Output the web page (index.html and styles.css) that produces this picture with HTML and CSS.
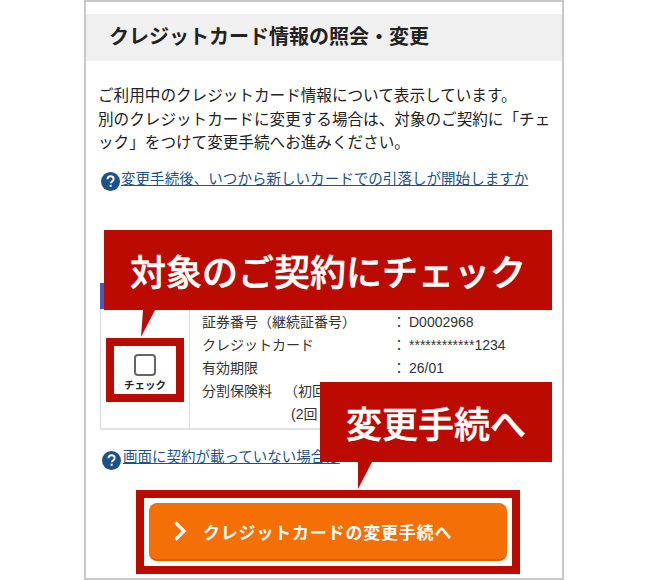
FILE: index.html
```html
<!DOCTYPE html>
<html lang="ja">
<head>
<meta charset="utf-8">
<title>クレジットカード情報の照会・変更</title>
<link rel="stylesheet" href="styles.css">
</head>
<body>
<main class="phone">
  <h1 class="title">クレジットカード情報の照会・変更</h1>
  <div class="content">
    <p class="intro">ご利用中のクレジットカード情報について表示しています。<br>別のクレジットカードに変更する場合は、対象のご契約に「チェック」をつけて変更手続へお進みください。</p>
    <a class="help help-first" href="#">
      <svg class="help-icon" viewBox="0 0 20 20"><circle cx="10" cy="10" r="10" fill="#1d5288"/><path d="M6.8 7.6C6.900 5.600 8.200 4.500 10.100 4.500c1.900 0 3.200 1.100 3.200 2.800 0 1.200-.6 1.900-1.600 2.600-.9.6-1.200 1-1.200 2" fill="none" stroke="#fff" stroke-width="2"/><rect x="9.100" y="13.400" width="2.100" height="2.200" fill="#fff"/></svg>
      <span class="help-text">変更手続後、いつから新しいカードでの引落しが開始しますか</span>
    </a>
    <section class="contract">
      <div class="contract-head"></div>
      <div class="contract-body">
        <div class="check-cell">
          <div class="check-mark">
            <span class="check-box"></span>
            <span class="check-label">チェック</span>
          </div>
        </div>
        <div class="details">
          <div class="row"><span class="key">証券番号（継続証番号）</span><span class="val"><i class="colon">：</i>D0002968</span></div>
          <div class="row"><span class="key">クレジットカード</span><span class="val"><i class="colon">：</i>************1234</span></div>
          <div class="row"><span class="key">有効期限</span><span class="val"><i class="colon">：</i>26/01</span></div>
          <div class="row"><span class="key">分割保険料<span class="sub">（初回</span></span></div>
          <div class="row"><span class="key key-second">(2回</span></div>
        </div>
      </div>
    </section>
    <a class="help help-second" href="#">
      <svg class="help-icon" viewBox="0 0 20 20"><circle cx="10" cy="10" r="10" fill="#1d5288"/><path d="M6.8 7.6C6.900 5.600 8.200 4.500 10.100 4.500c1.900 0 3.200 1.100 3.200 2.800 0 1.200-.6 1.900-1.600 2.600-.9.6-1.200 1-1.200 2" fill="none" stroke="#fff" stroke-width="2"/><rect x="9.100" y="13.400" width="2.100" height="2.200" fill="#fff"/></svg>
      <span class="help-text">画面に契約が載っていない場合は</span>
    </a>
    <div class="cta-frame">
      <a class="cta" href="#">
        <svg class="cta-arrow" viewBox="0 0 14 22"><path d="M2.500 2.500 11 11l-8.500 8.500" fill="none" stroke="#fff" stroke-width="3.200"/></svg>
        <span>クレジットカードの変更手続へ</span>
      </a>
    </div>
  </div>
  <div class="callout callout-check">対象のご契約にチェック</div>
  <div class="callout callout-change">変更手続へ</div>
</main>
</body>
</html>
```
FILE: styles.css
```css
* { box-sizing: border-box; }
html, body { margin: 0; padding: 0; background: #fff; }
body {
  width: 646px;
  height: 580px;
  overflow: hidden;
  font-family: "Liberation Sans", "Noto Sans CJK JP", sans-serif;
  color: #222;
}
.phone {
  position: relative;
  width: 480px;
  height: 580px;
  margin-left: 84px;
  padding-top: 12px;
  border: 2px solid #c9c9c9;
  overflow: hidden;
}
.title {
  margin: 0;
  height: 47px;
  padding-left: 23px;
  background: #f0f0f0;
  font-size: 20px;
  font-weight: 700;
  line-height: 46px;
  color: #222;
}
.content { padding: 23px 0 0 12px; }
.intro {
  margin: 0;
  width: 456px;
  font-size: 15.600px;
  line-height: 23.500px;
}
.help {
  display: flex;
  align-items: flex-start;
  color: #1d5288;
  text-decoration: none;
}
.help-first { margin: 15.500px 0 0 3px; }
.help-second { margin: 18px 0 0 4px; }
.help-icon { width: 19px; height: 19px; margin-top: 2px; flex: none; }
.help-second .help-icon { margin-top: 3px; }
.help-text {
  margin-left: 1px;
  font-size: 14.550px;
  line-height: 19px;
  text-decoration: underline;
}
.help-second .help-text { font-size: 14.500px; margin-left: 2px; }
.contract {
  width: 452px;
  margin: 92px 0 0 2px;
}
.contract-head { height: 26px; background: #4a5ab8; }
.contract-body {
  display: flex;
  height: 121px;
  border-left: 1px solid #ddd;
  border-bottom: 2px solid #e2e2e2;
}
.check-cell {
  width: 89px;
  flex: none;
  padding: 29px 0 0 5px;
  border-right: 1px solid #ddd;
}
.check-mark {
  display: flex;
  flex-direction: column;
  align-items: center;
  width: 78px;
  height: 64px;
  padding-top: 8px;
  border: 8px solid #bb0a00;
  background: #fff;
}
.check-box {
  width: 22px;
  height: 22px;
  border: 2px solid #666;
  border-radius: 4px;
}
.check-label {
  margin-top: 2px;
  font-size: 10.500px;
  font-weight: 700;
  line-height: 14px;
  white-space: nowrap;
}
.details { padding: 2px 0 0 12px; font-size: 14px; line-height: 23px; color: #333; }
.row { display: flex; white-space: nowrap; }
.key { width: 195px; flex: none; }
.sub { margin-left: 12px; }
.key-second { padding-left: 89px; }
.colon { font-style: normal; display: inline-block; width: 12px; margin-left: -5px; margin-right: 5px; }
.cta-frame {
  width: 384px;
  height: 84px;
  margin: 20px 0 0 38px;
  border: 8px solid #bb0a00;
  padding: 5px;
  background: #fff;
}
.cta {
  display: flex;
  align-items: center;
  width: 358px;
  height: 58px;
  padding-left: 24px;
  border-radius: 8px;
  background: #f46f06;
  border-bottom: 2px solid #d86205;
  color: #fff;
  font-size: 17px;
  font-weight: 700;
  letter-spacing: .8px;
  text-decoration: none;
}
.cta-arrow { width: 14px; height: 22px; margin-right: 16px; flex: none; }
.callout {
  position: absolute;
  display: flex;
  align-items: center;
  justify-content: center;
  height: 80px;
  background: #bb0a00;
  color: #fff;
  font-size: 36px;
  font-weight: 500;
  -webkit-text-stroke: .5px #fff;
  white-space: nowrap;
}
.callout::after {
  content: "";
  position: absolute;
  top: 100%;
  width: 14px;
  height: 27px;
  background: #bb0a00;
  clip-path: polygon(0 100%, 0 0, 100% 0);
}
.callout-check { left: 18px; top: 228px; width: 448px; }
.callout-check::after { left: 37px; clip-path: polygon(0 100%, 2px 0, 100% 0); }
.callout-change { left: 234px; top: 380px; width: 232px; }
.callout-change::after { left: 38px; }
```
